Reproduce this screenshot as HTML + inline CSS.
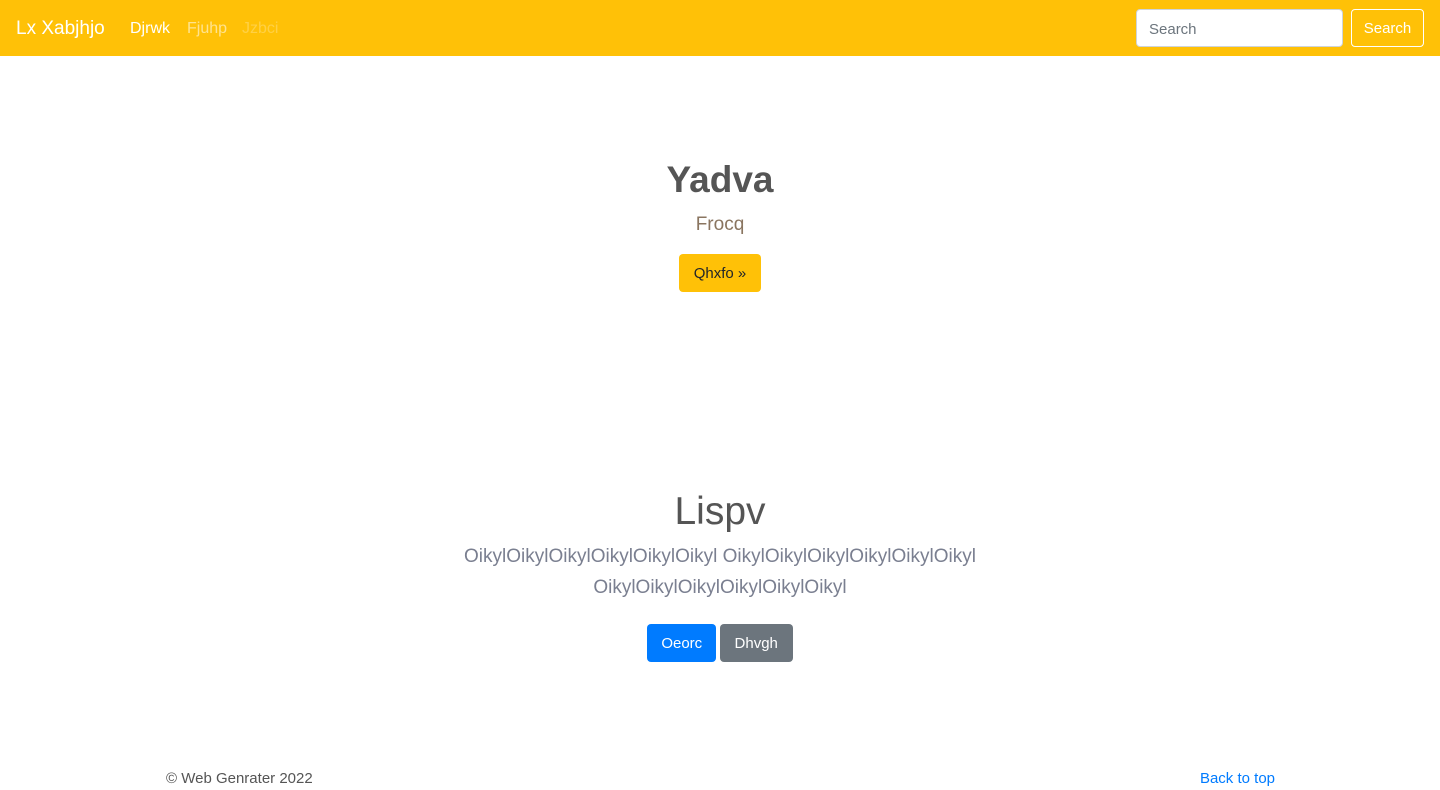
<!DOCTYPE html>
<html><head><meta charset="utf-8"><style>
*{box-sizing:border-box;margin:0;padding:0}
body{width:1440px;height:790px;overflow:hidden;font-family:"Liberation Sans",sans-serif;background:#fff;color:#212529;position:relative}
nav{height:56px;background:#ffc107;position:relative}
.brand{position:absolute;left:16px;top:16px;font-size:19px;color:#fff;line-height:26px}
.nl{position:absolute;top:19px;font-size:16px;line-height:20px}
input{position:absolute;left:1136px;top:9px;width:207px;height:38px;border:1px solid #ced4da;border-radius:4px;padding:2px 12px 0;font:15px "Liberation Sans",sans-serif;color:#6c757d;background:#fff}
.sb{position:absolute;left:1351px;top:9px;width:73px;height:38px;border:1px solid #fff;border-radius:4px;color:#fff;font-size:15px;text-align:center;line-height:38px}
.c{position:absolute;left:0;width:1440px;text-align:center}
.btn{display:inline-block;border-radius:4px;font-size:15px;line-height:40px;height:38px}
</style></head><body>
<nav>
<div class="brand">Lx Xabjhjo</div>
<div class="nl" style="left:130px;color:#fff">Djrwk</div>
<div class="nl" style="left:187px;color:rgba(255,255,255,.55)">Fjuhp</div>
<div class="nl" style="left:242px;color:rgba(255,255,255,.25)">Jzbci</div>
<input value="Search">
<div class="sb">Search</div>
</nav>
<div class="c" style="top:156px;font-size:37px;font-weight:bold;color:#555;line-height:48px">Yadva</div>
<div class="c" style="top:213px;font-size:19px;font-weight:300;color:#8a7560;line-height:24px">Frocq</div>
<div class="c" style="top:254px"><span class="btn" style="background:#ffc107;color:#212529;width:82px">Qhxfo »</span></div>
<div class="c" style="top:486px;font-size:39px;font-weight:300;color:#555;line-height:52px">Lispv</div>
<div class="c" style="top:541px;font-size:19px;font-weight:300;color:#7a7f90;line-height:31px;letter-spacing:0px;white-space:nowrap">OikylOikylOikylOikylOikylOikyl OikylOikylOikylOikylOikylOikyl<br>OikylOikylOikylOikylOikylOikyl</div>
<div class="c" style="top:624px"><span class="btn" style="background:#007bff;color:#fff;width:69px">Oeorc</span> <span class="btn" style="background:#6c757d;color:#fff;width:73px;margin-left:-1px">Dhvgh</span></div>
<div style="position:absolute;left:166px;top:770px;font-size:15px;color:#555">© Web Genrater 2022</div>
<div style="position:absolute;right:165px;top:770px;font-size:15px;color:#007bff">Back to top</div>
</body></html>
